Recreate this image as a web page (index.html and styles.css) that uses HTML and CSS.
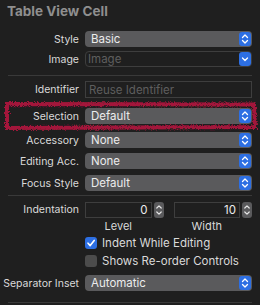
FILE: index.html
```html
<!DOCTYPE html>
<html lang="en">
<head>
  <meta charset="UTF-8" />
  <title>Table View Cell</title>
  <link rel="stylesheet" href="styles.css">
</head>
<body>
  <div class="inspector">
    <h2 class="section-title">Table View Cell</h2>

    <!-- Style / Image -->
    <div class="row row-style">
      <label class="row-label">Style</label>
      <div class="popup">
        <span class="popup-text">Basic</span>
        <span class="popup-arrow"><svg viewBox="0 0 12 14" width="12" height="14"><path d="M3.5 5.5 6 3l2.5 2.5M3.5 8.5 6 11l2.5-2.5" fill="none" stroke="#fff" stroke-width="1.3" stroke-linecap="round" stroke-linejoin="round"/></svg></span>
      </div>
    </div>
    <div class="row row-image">
      <label class="row-label">Image</label>
      <div class="popup popup-combo">
        <span class="popup-text placeholder">Image</span>
        <span class="popup-arrow"><svg viewBox="0 0 12 14" width="12" height="14"><path d="M3.5 6 6 8.5 8.5 6" fill="none" stroke="#fff" stroke-width="1.3" stroke-linecap="round" stroke-linejoin="round"/></svg></span>
      </div>
    </div>

    <div class="divider divider-first"></div>

    <div class="row row-identifier">
      <label class="row-label">Identifier</label>
      <div class="text-field"><span class="placeholder">Reuse Identifier</span></div>
    </div>
    <div class="row row-selection">
      <label class="row-label">Selection</label>
      <div class="popup">
        <span class="popup-text">Default</span>
        <span class="popup-arrow"><svg viewBox="0 0 12 14" width="12" height="14"><path d="M3.5 5.5 6 3l2.5 2.5M3.5 8.5 6 11l2.5-2.5" fill="none" stroke="#fff" stroke-width="1.3" stroke-linecap="round" stroke-linejoin="round"/></svg></span>
      </div>
      <svg class="scribble" viewBox="0 0 256 32" width="256" height="32">
        <defs>
          <filter id="rough" x="-5%" y="-20%" width="110%" height="140%">
            <feTurbulence type="fractalNoise" baseFrequency="1.3" numOctaves="2" seed="5"/>
            <feDisplacementMap in="SourceGraphic" scale="4.5"/>
          </filter>
        </defs>
        <path d="M4 4 L251 4.5 L252 27 L4 28 Z" fill="none" stroke="#a3163a" stroke-width="4" filter="url(#rough)"/>
      </svg>
    </div>
    <div class="row row-accessory">
      <label class="row-label">Accessory</label>
      <div class="popup">
        <span class="popup-text">None</span>
        <span class="popup-arrow"><svg viewBox="0 0 12 14" width="12" height="14"><path d="M3.5 5.5 6 3l2.5 2.5M3.5 8.5 6 11l2.5-2.5" fill="none" stroke="#fff" stroke-width="1.3" stroke-linecap="round" stroke-linejoin="round"/></svg></span>
      </div>
    </div>
    <div class="row row-editing">
      <label class="row-label">Editing Acc.</label>
      <div class="popup">
        <span class="popup-text">None</span>
        <span class="popup-arrow"><svg viewBox="0 0 12 14" width="12" height="14"><path d="M3.5 5.5 6 3l2.5 2.5M3.5 8.5 6 11l2.5-2.5" fill="none" stroke="#fff" stroke-width="1.3" stroke-linecap="round" stroke-linejoin="round"/></svg></span>
      </div>
    </div>
    <div class="row row-focus">
      <label class="row-label">Focus Style</label>
      <div class="popup">
        <span class="popup-text">Default</span>
        <span class="popup-arrow"><svg viewBox="0 0 12 14" width="12" height="14"><path d="M3.5 5.5 6 3l2.5 2.5M3.5 8.5 6 11l2.5-2.5" fill="none" stroke="#fff" stroke-width="1.3" stroke-linecap="round" stroke-linejoin="round"/></svg></span>
      </div>
    </div>

    <div class="divider divider-second"></div>

    <!-- Indentation -->
    <div class="row row-indent">
      <label class="row-label">Indentation</label>
      <div class="steppers">
        <div class="stepper-group">
          <div class="stepper-field">
            <div class="number-field">0</div>
            <span class="stepper"><svg viewBox="0 0 10 16" width="10" height="16"><path d="M2.8 6 5 3.8 7.2 6M2.8 10 5 12.2 7.2 10" fill="none" stroke="#e8e8e8" stroke-width="1.2" stroke-linecap="round" stroke-linejoin="round"/></svg></span>
          </div>
          <div class="sub-label">Level</div>
        </div>
        <div class="stepper-group">
          <div class="stepper-field">
            <div class="number-field">10</div>
            <span class="stepper"><svg viewBox="0 0 10 16" width="10" height="16"><path d="M2.8 6 5 3.8 7.2 6M2.8 10 5 12.2 7.2 10" fill="none" stroke="#e8e8e8" stroke-width="1.2" stroke-linecap="round" stroke-linejoin="round"/></svg></span>
          </div>
          <div class="sub-label">Width</div>
        </div>
      </div>
    </div>

    <div class="check-row check-indent">
      <span class="checkbox checked"><svg viewBox="0 0 12 12" width="12" height="12"><path d="M3 6.2 5.2 8.6 9.2 3.4" fill="none" stroke="#fff" stroke-width="1.6" stroke-linecap="round" stroke-linejoin="round"/></svg></span>
      <span class="check-text">Indent While Editing</span>
    </div>
    <div class="check-row check-reorder">
      <span class="checkbox"></span>
      <span class="check-text">Shows Re-order Controls</span>
    </div>

    <div class="row row-inset">
      <label class="row-label">Separator Inset</label>
      <div class="popup">
        <span class="popup-text">Automatic</span>
        <span class="popup-arrow"><svg viewBox="0 0 12 14" width="12" height="14"><path d="M3.5 5.5 6 3l2.5 2.5M3.5 8.5 6 11l2.5-2.5" fill="none" stroke="#fff" stroke-width="1.3" stroke-linecap="round" stroke-linejoin="round"/></svg></span>
      </div>
    </div>

    <div class="divider divider-bottom"></div>
  </div>
</body>
</html>
```

FILE: styles.css
```css
:root {
  --bg-color: #1f1f1f;
  --label-color: #dadada;
  --title-color: #8f8f8f;
  --popup-bg: #5a5a5c;
  --field-border: #3e3e3e;
  --placeholder: #5e5e5e;
  --accent: #2d6fe3;
  --divider: #393939;
}

* {
  box-sizing: border-box;
  margin: 0;
  padding: 0;
}

body {
  font-family: Inter, Roboto, 'Liberation Sans', sans-serif;
  font-size: 11px;
  background-color: var(--bg-color);
  color: var(--label-color);
  width: 260px;
  height: 305px;
  overflow: hidden;
}

.inspector {
  padding: 4px 8px 0 0;
}

.section-title {
  font-size: 13.5px;
  font-weight: 700;
  color: var(--title-color);
  padding-left: 7px;
  line-height: 14px;
}

/* Label + control rows */
.row {
  display: grid;
  grid-template-columns: 79px 1fr;
  column-gap: 6px;
  align-items: center;
  position: relative;
}

.row-label {
  text-align: right;
  white-space: nowrap;
  font-size: 10.5px;
}

.row-style { margin-top: 13px; }
.row-image { margin-top: 4px; }
.row-identifier { margin-top: 5px; }
.row-selection { margin-top: 10px; }
.row-accessory { margin-top: 8px; }
.row-editing { margin-top: 5px; }
.row-focus { margin-top: 6px; }
.row-indent { margin-top: 6px; align-items: start; }
.row-indent .row-label { line-height: 16px; }
.row-inset { margin-top: 8px; }

.popup {
  height: 16px;
  background-color: var(--popup-bg);
  border-radius: 4px;
  display: flex;
  align-items: center;
  justify-content: space-between;
  padding: 0 1px 0 6px;
}

.popup-text {
  font-size: 11.5px;
  color: #ececec;
}

.popup-combo {
  background-color: transparent;
  border: 1px solid var(--field-border);
  padding-left: 2px;
  padding-right: 0;
}

.placeholder {
  color: var(--placeholder);
  font-size: 11.5px;
}

.popup-arrow {
  width: 12px;
  height: 14px;
  background-color: var(--accent);
  border-radius: 3px;
  display: flex;
}

.text-field {
  height: 17px;
  border: 1px solid var(--field-border);
  display: flex;
  align-items: center;
  padding-left: 3px;
}

.divider {
  height: 1px;
  background-color: var(--divider);
  margin-left: 8px;
}

.divider-first { margin-top: 8px; }
.divider-second { margin-top: 4px; }
.divider-bottom { margin-top: 11px; }

/* Red highlight scribble around the Selection row */
.scribble {
  position: absolute;
  left: 3px;
  top: -8px;
  pointer-events: none;
}

/* Steppers */
.steppers {
  display: grid;
  grid-template-columns: 1fr 1fr;
  column-gap: 10px;
}

.stepper-field {
  display: flex;
  align-items: center;
  gap: 2px;
}

.number-field {
  flex: 1;
  height: 16px;
  border: 1px solid var(--field-border);
  text-align: right;
  padding-right: 3px;
  line-height: 14px;
  font-size: 11.5px;
  color: #ececec;
}

.stepper {
  width: 10px;
  height: 16px;
  background-color: var(--popup-bg);
  border-radius: 3px;
  display: flex;
}

.sub-label {
  text-align: center;
  padding-right: 12px;
  margin-top: 2px;
  line-height: 13px;
}

/* Checkboxes */
.check-row {
  display: flex;
  align-items: center;
  gap: 5px;
  padding-left: 85px;
  height: 12px;
}

.check-indent { margin-top: 4px; }
.check-reorder { margin-top: 6px; }

.checkbox {
  width: 12px;
  height: 12px;
  border-radius: 3px;
  background-color: #4c4c4c;
  display: flex;
}

.checkbox.checked {
  background-color: var(--accent);
}

.check-text {
  font-size: 11.5px;
}
```
